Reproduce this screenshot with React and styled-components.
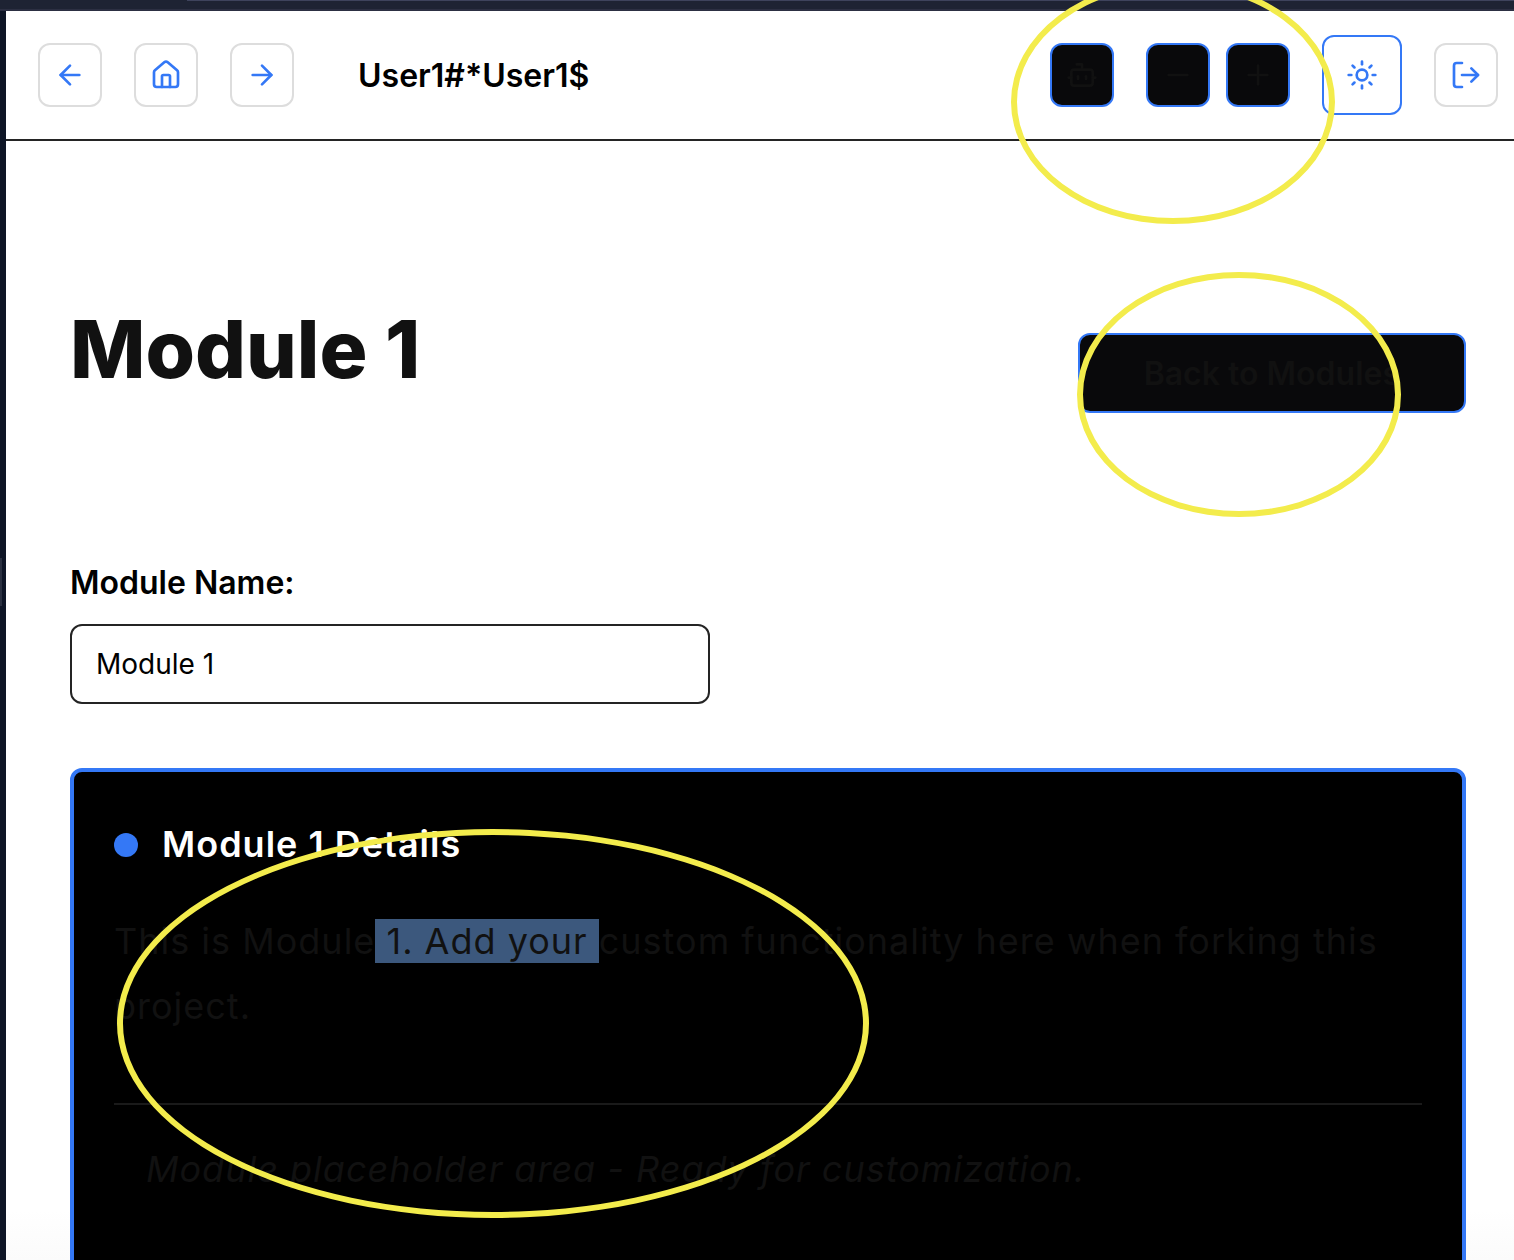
import React, { useState } from "react";
import styled, { createGlobalStyle } from "styled-components";
import { ArrowLeft, ArrowRight, Bot, House, LogOut, Minus, Plus, Sun } from "lucide-react";

const blue = "#3478f6";
const ink = "#111111";

const GlobalStyle = createGlobalStyle`
  * { box-sizing: border-box; }
  body { margin: 0; background: #ffffff; color: #000000; font-family: Inter, "Liberation Sans", sans-serif; }
  button, input { font: inherit; margin: 0; }
  h1, h2, p { margin: 0; }
`;

const Screen = styled.div`
  position: relative;
  display: flex;
  flex-direction: column;
  height: 100vh;
  overflow: hidden;
`;

const WindowBar = styled.div`
  flex: none;
  height: 11px;
  background: #1e2333;
  border-bottom: 2px solid #2c2f42;
`;

const BarEdge = styled.div`
  height: 1px;
  margin-left: 187px;
  background: #3e435c;
`;

const Body = styled.div`
  flex: 1;
  min-height: 0;
  display: flex;
`;

const Rail = styled.div`
  flex: none;
  width: 6px;
  display: flex;
  align-items: center;
  padding-bottom: 108px;
  background: #0e1526;
`;

const RailHandle = styled.div`
  width: 2px;
  height: 48px;
  background: #2a3040;
`;

const Page = styled.div`
  flex: 1;
  min-width: 0;
  background: linear-gradient(#ffffff 96%, #fbfbfb);
`;

const Header = styled.header`
  display: flex;
  align-items: center;
  justify-content: space-between;
  height: 130px;
  padding: 0 16px 0 32px;
  border-bottom: 2px solid #242424;
`;

const Group = styled.div`
  display: flex;
  align-items: center;
  gap: ${(p) => (p.$tight ? "16px" : "32px")};
`;

const UserName = styled.span`
  padding-left: 32px;
  font-size: 32px;
  font-weight: 600;
`;

const IconButton = styled.button`
  display: flex;
  align-items: center;
  justify-content: center;
  width: ${(p) => (p.$large ? "80px" : "64px")};
  height: ${(p) => (p.$large ? "80px" : "64px")};
  padding: 0;
  border: 2px solid ${(p) => (p.$dark || p.$large ? blue : "#dddddd")};
  border-radius: 12px;
  background: ${(p) => (p.$dark ? "#09090b" : "#ffffff")};
  color: ${(p) => (p.$dark ? ink : blue)};
`;

const Main = styled.main`
  padding: 160px 48px 0 64px;
`;

const TitleRow = styled.div`
  display: flex;
  align-items: flex-end;
  justify-content: space-between;
  height: 112px;
`;

const Title = styled.h1`
  padding-bottom: 16px;
  color: ${ink};
  font-size: 80px;
  line-height: 96px;
  font-weight: 800;
`;

const BackButton = styled.button`
  height: 80px;
  padding: 0 64px;
  border: 2px solid ${blue};
  border-radius: 12px;
  background: #09090b;
  color: ${ink};
  font-size: 32px;
  font-weight: 600;
`;

const Field = styled.div`
  display: flex;
  flex-direction: column;
  gap: 16px;
  padding: 144px 0 64px;
`;

const Label = styled.label`
  font-size: 32px;
  line-height: 51px;
  font-weight: 600;
`;

const TextBox = styled.input`
  width: 100%;
  max-width: 640px;
  height: 80px;
  padding: 0 24px;
  border: 2px solid #242424;
  border-radius: 12px;
  background: transparent;
  color: #000000;
  font-size: 28px;
`;

const Card = styled.section`
  padding: 40px 40px 160px;
  border: 4px solid ${blue};
  border-radius: 12px;
  background: #000000;
  color: ${ink};
  font-size: 36px;
  line-height: 65px;
  letter-spacing: 1px;
`;

const CardHead = styled.div`
  display: flex;
  align-items: center;
  gap: 24px;
  padding-bottom: 32px;
`;

const Dot = styled.span`
  width: 24px;
  height: 24px;
  border-radius: 50%;
  background: ${blue};
`;

const CardTitle = styled.h2`
  color: #ffffff;
  font-size: 36px;
  font-weight: 600;
`;

const Highlight = styled.mark`
  background: #3c587d;
  color: ${ink};
`;

const Placeholder = styled.p`
  margin-top: 64px;
  padding: 32px;
  border-top: 2px solid #1a1a1a;
  font-style: italic;
`;

const Ring = styled.div`
  position: absolute;
  z-index: 2;
  border: 6px solid #f3ec4c;
  border-radius: 50%;
  pointer-events: none;
`;

const ToolbarRing = styled(Ring)`
  top: -20px;
  right: 179px;
  width: 324px;
  height: 244px;
`;

const BackRing = styled(Ring)`
  top: 272px;
  right: 113px;
  width: 324px;
  height: 245px;
`;

const DetailsRing = styled(Ring)`
  top: 829px;
  left: 117px;
  width: 752px;
  height: 389px;
`;

export default function App() {
  const [name, setName] = useState("Module 1");
  return (
    <>
      <GlobalStyle />
      <Screen>
        <WindowBar>
          <BarEdge />
        </WindowBar>
        <Body>
          <Rail>
            <RailHandle />
          </Rail>
          <Page>
            <Header>
              <Group as="nav">
                <IconButton aria-label="Back"><ArrowLeft size={32} /></IconButton>
                <IconButton aria-label="Home"><House size={32} /></IconButton>
                <IconButton aria-label="Forward"><ArrowRight size={32} /></IconButton>
                <UserName>User1#*User1$</UserName>
              </Group>
              <Group>
                <IconButton $dark aria-label="Assistant"><Bot size={32} /></IconButton>
                <Group $tight>
                  <IconButton $dark aria-label="Decrease"><Minus size={32} /></IconButton>
                  <IconButton $dark aria-label="Increase"><Plus size={32} /></IconButton>
                </Group>
                <IconButton $large aria-label="Theme"><Sun size={32} /></IconButton>
                <IconButton aria-label="Log out"><LogOut size={32} /></IconButton>
              </Group>
            </Header>
            <Main>
              <TitleRow>
                <Title>Module 1</Title>
                <BackButton>Back to Modules</BackButton>
              </TitleRow>
              <Field>
                <Label htmlFor="module-name">Module Name:</Label>
                <TextBox id="module-name" value={name} onChange={(e) => setName(e.target.value)} />
              </Field>
              <Card>
                <CardHead>
                  <Dot />
                  <CardTitle>Module 1 Details</CardTitle>
                </CardHead>
                <p>
                  This is Module<Highlight> 1. Add your </Highlight>custom functionality here when forking this project.
                </p>
                <Placeholder>Module placeholder area - Ready for customization.</Placeholder>
              </Card>
            </Main>
          </Page>
        </Body>
        <ToolbarRing />
        <BackRing />
        <DetailsRing />
      </Screen>
    </>
  );
}
